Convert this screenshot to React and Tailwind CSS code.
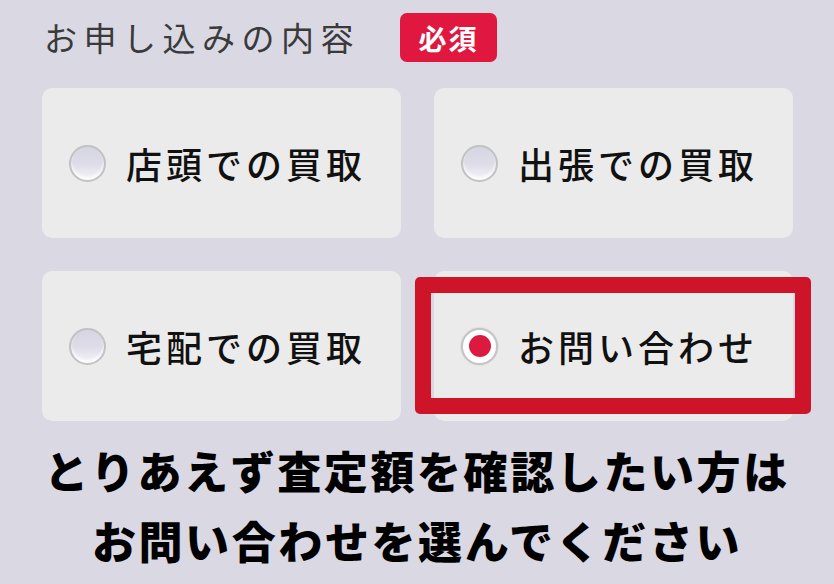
import React from "react";

const font = { fontFamily: '"Noto Sans CJK JP", "Noto Sans", sans-serif' };

function Radio({ checked }) {
  if (checked) {
    return (
      <div className="w-[37px] h-[37px] rounded-full border-2 border-[#c4c4c4] bg-white flex items-center justify-center shrink-0 shadow-[0_0_2px_rgba(0,0,0,0.15)]">
        <div className="w-[22px] h-[22px] rounded-full bg-[#dc1a40]" />
      </div>
    );
  }
  return (
    <div className="w-[37px] h-[37px] rounded-full border-2 border-[#c2c2c2] bg-gradient-to-b from-[#d6d5e2] via-[#dddce8] to-[#f4f4f8] shrink-0 shadow-[inset_0_-3px_3px_rgba(255,255,255,0.8)]" />
  );
}

function Card({ label, checked }) {
  return (
    <div className="relative h-[150px] rounded-[10px] bg-[#ebebeb] flex items-center pl-[27px]">
      <Radio checked={checked} />
      <span className="ml-[20px] text-[36px] font-medium tracking-[4px] text-[#111]" style={font}>
        {label}
      </span>
      {checked && (
        <div className="absolute left-[-19px] right-[-18px] top-[6px] bottom-[7px] rounded-[5px] border-[16px] border-[#cd1428] pointer-events-none" />
      )}
    </div>
  );
}

export default function App() {
  return (
    <div className="w-[834px] h-[584px] bg-[#d9d8e3] overflow-hidden" style={font}>
      <div className="flex items-center pt-[13px] pl-[44px] h-[62px]">
        <span className="text-[33px] tracking-[6.5px] text-[#3a3a3a] leading-none">お申し込みの内容</span>
        <span className="ml-[40px] w-[97px] h-[49px] rounded-[7px] bg-[#e0173f] text-white text-[28px] font-bold tracking-[2px] flex items-center justify-center leading-none">
          必須
        </span>
      </div>
      <div className="mt-[26px] mx-[42px] grid grid-cols-[359px_359px] gap-x-[33px] gap-y-[33px]">
        <Card label="店頭での買取" />
        <Card label="出張での買取" />
        <Card label="宅配での買取" />
        <Card label="お問い合わせ" checked />
      </div>
      <div className="mt-[14px] text-center text-[44px] font-black leading-[70px] tracking-[2.6px] text-black">
        <div>とりあえず査定額を確認したい方は</div>
        <div>お問い合わせを選んでください</div>
      </div>
    </div>
  );
}
